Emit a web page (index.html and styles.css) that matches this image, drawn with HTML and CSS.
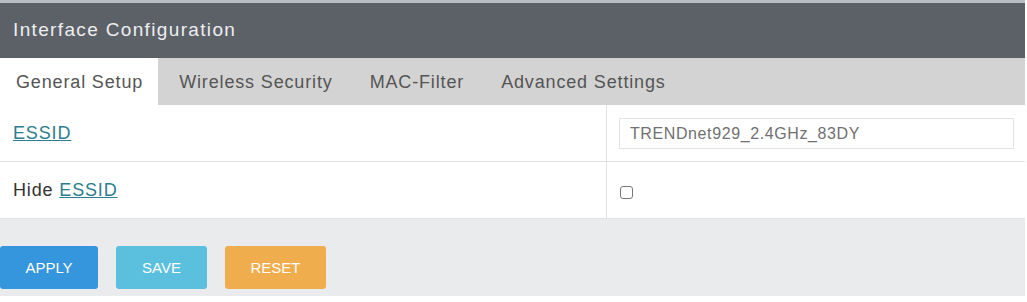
FILE: index.html
```
<!DOCTYPE html>
<html>
<head>
<meta charset="utf-8">
<link rel="stylesheet" href="styles.css">
</head>
<body>
<div class="panel">
  <div class="panel-title">Interface Configuration</div>
  <div class="tabs">
    <div class="tab active">General Setup</div>
    <div class="tab">Wireless Security</div>
    <div class="tab">MAC-Filter</div>
    <div class="tab">Advanced Settings</div>
  </div>
  <div class="rows">
    <div class="row">
      <div class="label"><span><a class="link" href="#">ESSID</a></span></div>
      <div class="value"><input class="text-input" type="text" value="TRENDnet929_2.4GHz_83DY"></div>
    </div>
    <div class="row">
      <div class="label"><span>Hide <a class="link" href="#">ESSID</a></span></div>
      <div class="value"><span class="checkbox"></span></div>
    </div>
  </div>
  <div class="footer">
    <button class="btn btn-apply">APPLY</button>
    <button class="btn btn-save">SAVE</button>
    <button class="btn btn-reset">RESET</button>
  </div>
</div>
</body>
</html>
```
FILE: styles.css
```
html, body {
  margin: 0;
  padding: 0;
  background: #ffffff;
}
body {
  font-family: "Liberation Sans", Arial, sans-serif;
}
.panel {
  width: 1025px;
}
.panel-title {
  border-top: 3px solid #b9bec5;
  background: #5c6168;
  height: 58px;
  box-sizing: border-box;
  padding: 0 0 1px 13px;
  display: flex;
  align-items: center;
  color: #eceef0;
  font-size: 19px;
  letter-spacing: 1.35px;
}
.tabs {
  display: flex;
  height: 47px;
  background: #d3d3d3;
}
.tab {
  display: flex;
  align-items: center;
  padding: 2px 18px 0 19px;
  font-size: 18px;
  letter-spacing: 0.85px;
  color: #555;
}
.tab.active {
  background: #ffffff;
  padding: 2px 15px 0 16px;
  margin-right: 2px;
}
.rows {
  background: #ffffff;
}
.row {
  display: flex;
  height: 57px;
  border-bottom: 1px solid #e2e2e2;
  box-sizing: border-box;
}
.label {
  width: 607px;
  border-right: 1px solid #e2e2e2;
  box-sizing: border-box;
  padding: 0 0 0 13px;
  display: flex;
  align-items: center;
  font-size: 18px;
  letter-spacing: 0.85px;
  color: #333;
}
.link {
  color: #2e7d8e;
  text-decoration: underline;
}
.value {
  flex: 1;
  display: flex;
  align-items: center;
  padding-left: 12px;
}
.text-input {
  width: 395px;
  height: 31px;
  box-sizing: border-box;
  border: 1px solid #e3e3e3;
  padding: 0 0 0 10px;
  margin: 1px 0 0 0;
  font-family: "Liberation Sans", Arial, sans-serif;
  font-size: 16px;
  letter-spacing: 0.6px;
  color: #707070;
  outline: none;
  background: #fff;
}
.checkbox {
  display: block;
  width: 13px;
  height: 13px;
  border: 1.5px solid #777;
  border-radius: 3px;
  box-sizing: border-box;
  margin: 4px 0 0 1px;
}
.footer {
  background: #e9ebed;
  height: 77px;
  box-sizing: border-box;
  padding-top: 27px;
  display: flex;
  gap: 18px;
  align-items: flex-start;
}
.btn {
  height: 43px;
  border: none;
  border-radius: 3px;
  color: #fff;
  font-family: "Liberation Sans", Arial, sans-serif;
  font-size: 15px;
  padding: 0;
  cursor: pointer;
}
.btn-apply {
  width: 98px;
  background: #3596de;
}
.btn-save {
  width: 91px;
  background: #5bc0de;
}
.btn-reset {
  width: 101px;
  background: #f0ad4e;
}
```
